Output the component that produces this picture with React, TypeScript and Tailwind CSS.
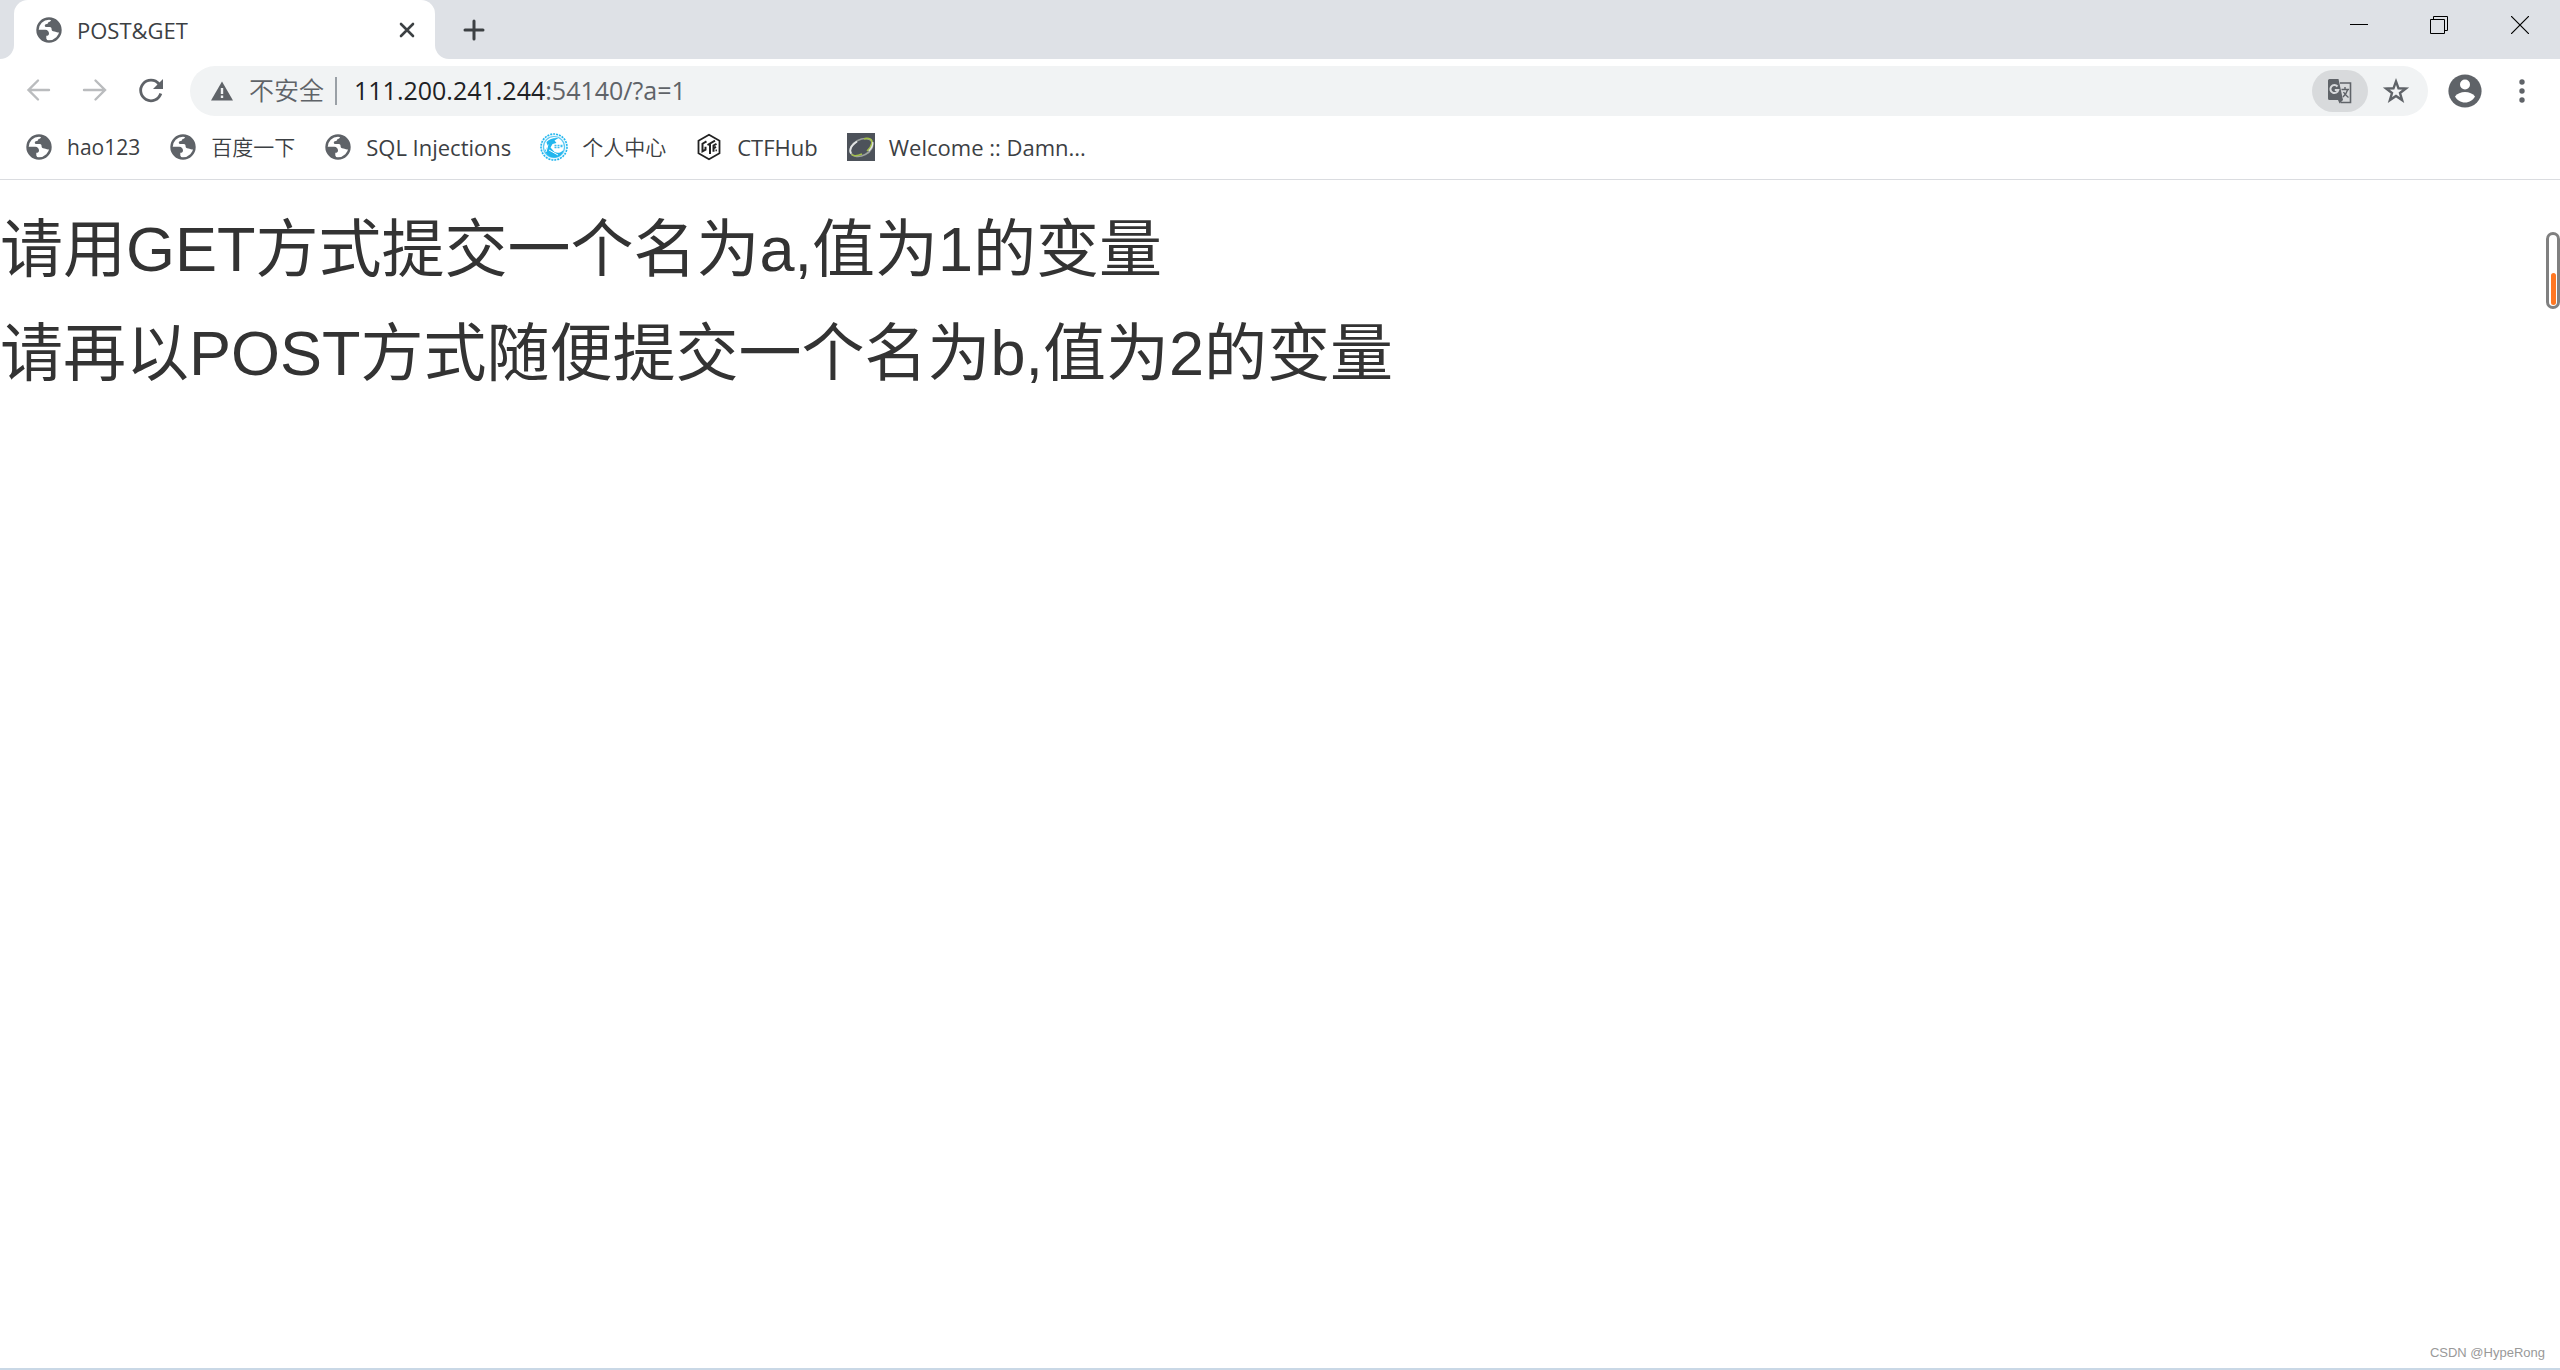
import type { ReactNode } from 'react';

const GlobeIcon = () => (
  <svg viewBox="0 0 28 28" className="h-7 w-7 shrink-0">
    <circle cx="14" cy="14" r="11.500" fill="#fff" stroke="#5f6368" strokeWidth="2.400" />
    <path
      d="M16 2.500c.3 2.200-.5 3.200-2.500 3.600-.4 1.600-1.200 2.200-2.700 2.200-1.300.4-1.400 2.300 0 2.700h4c1.500.2 1.800 1.200 1.800 2.500.3 1.600 1.500 2 3 1.900 1.300 0 1.700 1 3.400 1l2.500-.4C26.500 9.500 22.500 3.500 16 2.500z"
      fill="#5f6368"
    />
    <path
      d="M2.500 13.800h7.800c2.400.2 3.600 1.600 3.700 3.600 0 1.600-1 2.400-2.700 2.400v2.600l1.500 2.800C6.500 25 2.300 20 2.500 13.800z"
      fill="#5f6368"
    />
  </svg>
);

const SealIcon = () => (
  <svg viewBox="0 0 28 28" className="h-7 w-7 shrink-0">
    <circle cx="14" cy="14" r="13" fill="#e9f8fe" stroke="#22b6ee" strokeWidth="1.600" strokeDasharray="2 1" />
    <circle cx="14" cy="14" r="10.500" fill="#fff" stroke="#5cc9f3" strokeWidth="1.200" />
    <path d="M6.500 9c3-3 7-4.500 12-4l-4 2.500 2 2.500-4 1-2 3.500 4 4.500c3 1.500 6 1 9-2-1 5-5 7.500-9.500 7.500-5 0-8-3-9-7l2.500-4z" fill="#22b6ee" />
    <path d="M8 11.500 6 19M9 17l9 5" stroke="#fff" strokeWidth="1" />
    <path d="M14.500 12.500h2M17.500 12.500h2M20.500 12.500h2M14.500 14.500h2M17.500 14.500h2M20.500 13.500h2" stroke="#3cbdf0" strokeWidth="1.400" />
  </svg>
);

const HexIcon = () => (
  <svg viewBox="0 0 28 28" className="h-7 w-7 shrink-0" fill="none" stroke="#222">
    <path d="M14 1.800 24.500 7.800v12.400L14 26.200 3.500 20.200V7.800z" strokeWidth="1.800" />
    <path d="M11.500 8.300 7.500 10.700v7.600l3-1.600v-3M12.500 12l7.500-4.300M15 10.800V21M18.500 18.800v-6.300l3-1.700M18.500 15.300l2.500-1.400" strokeWidth="2" />
    <path d="M21.200 16.500v1.800" strokeWidth="1.400" />
  </svg>
);

const OrbitIcon = () => (
  <svg viewBox="0 0 28 28" className="h-7 w-7 shrink-0" fill="none">
    <path d="M0 0h28v28H0z" fill="#4d525a" />
    <ellipse cx="14.500" cy="14.500" rx="12" ry="8" transform="rotate(-28 14.500 14.500)" stroke="#9da29f" strokeWidth="1.600" />
    <path d="M4 20.500c-1.800-3.500 0-8 6-12" stroke="#e4e6e6" strokeWidth="1.800" />
    <path d="M17 6c5-1.500 8.500 0 8 4-.5 3-2 5.500-5 8M4.500 21.500c2.500 2 6 1.500 10.500-.5" stroke="#a3bf4a" strokeWidth="1.600" />
    <path d="M25.800 9c.3 2.500-1 6-4 9" stroke="#e4e6e6" strokeWidth="1.200" />
  </svg>
);

const bookmarks: { name: string; icon: ReactNode; font: string }[] = [
  { name: 'hao123', icon: <GlobeIcon />, font: 'text-[21px]' },
  { name: '百度一下', icon: <GlobeIcon />, font: 'text-[21px] font-[350]' },
  { name: 'SQL Injections', icon: <GlobeIcon />, font: 'text-[22px]' },
  { name: '个人中心', icon: <SealIcon />, font: 'text-[21px] font-[350]' },
  { name: 'CTFHub', icon: <HexIcon />, font: 'text-[22px]' },
  { name: 'Welcome :: Damn...', icon: <OrbitIcon />, font: 'text-[22px]' },
];

const TabStrip = () => (
  <header className="flex h-[59px] bg-[#dee1e6]">
    <div className="flex w-3.5 bg-white">
      <div className="flex-1 rounded-br-[14px] bg-[#dee1e6]" />
    </div>
    <div className="flex w-[421px] items-center rounded-t-[14px] bg-white pl-[21px] pr-3.5">
      <GlobeIcon />
      <span className="ml-3.5 flex-1 text-[22px]">POST&amp;GET</span>
      <button aria-label="Close tab" className="flex h-7 w-7 items-center justify-center">
        <svg viewBox="0 0 16 16" className="h-4 w-4" stroke="#3c4043" strokeWidth="2.600" strokeLinecap="round">
          <path d="M2 2l12 12M14 2 2 14" />
        </svg>
      </button>
    </div>
    <div className="flex flex-1 bg-white">
      <div className="flex flex-1 items-center rounded-bl-[14px] bg-[#dee1e6] pl-[25px]">
        <button aria-label="New tab" className="flex h-7 w-7 items-center justify-center">
          <svg viewBox="0 0 22 22" className="h-[22px] w-[22px]" stroke="#3c4043" strokeWidth="3" strokeLinecap="round">
            <path d="M11 2v18M2 11h18" />
          </svg>
        </button>
      </div>
    </div>
    <div className="flex h-[50px] bg-[#dee1e6]">
      <button aria-label="Minimize" className="flex w-20 items-center justify-center">
        <svg viewBox="0 0 18 18" className="h-[18px] w-[18px]" fill="#000">
          <path d="M0 8h18v1H0z" />
        </svg>
      </button>
      <button aria-label="Restore" className="flex w-20 items-center justify-center">
        <svg viewBox="0 0 18 18" className="h-[18px] w-[18px]" fill="none" stroke="#000">
          <path d="M.5 3.500h14v14H.5zM3.500 3.500v-3h14v14h-3" />
        </svg>
      </button>
      <button aria-label="Close" className="flex w-[81px] items-center justify-center">
        <svg viewBox="0 0 18 18" className="h-[18px] w-[18px]" stroke="#000" strokeWidth="1.200">
          <path d="M0 0l18 18M18 0 0 18" />
        </svg>
      </button>
    </div>
  </header>
);

const Toolbar = () => (
  <div className="flex h-16 items-center bg-white pl-[25px] pr-6">
    <nav className="flex gap-7 pb-0.5">
      <button aria-label="Back">
        <svg viewBox="0 0 28 28" className="h-7 w-7" fill="none" stroke="#babcbe" strokeWidth="2.400" strokeLinecap="round">
          <path d="M24 14H4M13 4.500 3.500 14l9.500 9.500" />
        </svg>
      </button>
      <button aria-label="Forward">
        <svg viewBox="0 0 28 28" className="h-7 w-7" fill="none" stroke="#babcbe" strokeWidth="2.400" strokeLinecap="round">
          <path d="M3 14h20M14.500 4.500 24 14l-9.500 9.500" />
        </svg>
      </button>
      <button aria-label="Reload">
        <svg viewBox="0 0 28 28" className="h-7 w-7" fill="none">
          <path d="M22 8a10.300 10.300 0 1 0 1.800 9.500" stroke="#5f6368" strokeWidth="2.800" />
          <path d="M26 3v10H16z" fill="#5f6368" />
        </svg>
      </button>
    </nav>
    <form className="ml-[25px] flex h-[50px] flex-1 items-center rounded-full bg-[#f1f3f4] pl-5 pr-[18px] text-[25px] text-[#5f6368]">
      <button type="button" className="flex items-center">
        <svg viewBox="0 0 24 24" className="mr-[15px] h-6 w-6">
          <path d="M12 2.500 23 21.500H1z" fill="#5f6368" />
          <path d="M10.800 9h2.400v6h-2.400zM10.800 16.500h2.400v2.400h-2.400z" fill="#f1f3f4" />
        </svg>
        <span className="pb-0.5 font-[350]">不安全</span>
      </button>
      <span className="ml-[11px] mr-[17px] h-7 w-0.5 bg-[#9aa0a6]" />
      <a href="#" className="flex-1 pb-0.5">
        <span className="text-[#202124]">111.200.241.244</span>:54140/?a=1
      </a>
      <button type="button" aria-label="Translate" className="flex h-[42px] w-14 items-center justify-center rounded-full bg-[#d8dadc]">
        <svg viewBox="0 0 26 26" className="h-[26px] w-[26px]" fill="none">
          <path d="M13 5h10.500v19.500H13.500" stroke="#5f6368" strokeWidth="1.600" />
          <path d="M2.500 1h9l4.500 21H2.500A1.500 1.500 0 0 1 1 20.500v-18A1.500 1.500 0 0 1 2.500 1z" fill="#5f6368" />
          <path d="M11 22h5l-3.500 3.500z" fill="#5f6368" />
          <path d="M10.500 8.500a4 4 0 1 0 .8 3.500H7.800" stroke="#d8dadc" strokeWidth="2" />
          <path d="M14.500 11.500H22M18 9v2.500M20.500 12c-.8 3-2.500 5-4.500 7M16.500 14c1 2 3 4 5 5.500" stroke="#5f6368" strokeWidth="1.400" />
        </svg>
      </button>
      <button type="button" aria-label="Bookmark this tab" className="ml-3.5">
        <svg viewBox="0 0 28 28" className="h-7 w-7" fill="none" stroke="#5f6368" strokeWidth="2.400">
          <path d="m14 4.400 2.500 6.900 7.300.2-5.800 4.500 2.100 7.100-6.100-4.200-6.100 4.200L10 16l-5.800-4.500 7.300-.2z" />
        </svg>
      </button>
    </form>
    <button aria-label="Profile" className="ml-5">
      <svg viewBox="0 0 34 34" className="h-[34px] w-[34px]">
        <circle cx="17" cy="17" r="16.600" fill="#5f6368" />
        <circle cx="17" cy="10.500" r="5" fill="#fff" />
        <path d="M7 22.500c2-3 6-4.500 10-4.500s8 1.500 10 4.500c-2 3.500-5.500 6-10 6s-8-2.500-10-6z" fill="#fff" />
      </svg>
    </button>
    <button aria-label="Menu" className="ml-[26px]">
      <svg viewBox="0 0 28 28" className="h-7 w-7" fill="#5f6368">
        <circle cx="14" cy="5" r="2.700" />
        <circle cx="14" cy="14" r="2.700" />
        <circle cx="14" cy="23" r="2.700" />
      </svg>
    </button>
  </div>
);

const App = () => {
  return (
    <div className="flex min-h-screen flex-col bg-white font-['Open_Sans','Noto_Sans_CJK_SC',sans-serif] leading-7 text-[#3c4043]">
      <TabStrip />
      <Toolbar />
      <nav className="flex h-[57px] gap-[29px] border-b border-[#dadce0] pl-[25px] pt-2.5">
        {bookmarks.map((item) => (
          <a key={item.name} href="#" className={`flex h-7 items-center gap-3.5 ${item.font}`}>
            {item.icon}
            {item.name}
          </a>
        ))}
      </nav>

      <main className="relative flex-1 border-b-2 border-[#c9d8e6] font-['Liberation_Sans','Noto_Sans_CJK_SC',sans-serif] text-[#333]">
        <h1 className="mt-[35px] text-[63px] leading-[69px]">请用GET方式提交一个名为a,值为1的变量</h1>
        <h1 className="mt-[35px] text-[63px] leading-[69px]">请再以POST方式随便提交一个名为b,值为2的变量</h1>
        <div className="absolute right-0 top-[52px] flex h-[77px] w-3.5 items-end justify-center rounded-full border-[3px] border-[#808080] bg-white pb-px">
          <div className="h-8 w-[5px] rounded-full bg-[#ff7722]" />
        </div>
        <span className="absolute bottom-px right-[15px] text-[13px] text-[#999]">CSDN @HypeRong</span>
      </main>
    </div>
  );
};

export default App;
